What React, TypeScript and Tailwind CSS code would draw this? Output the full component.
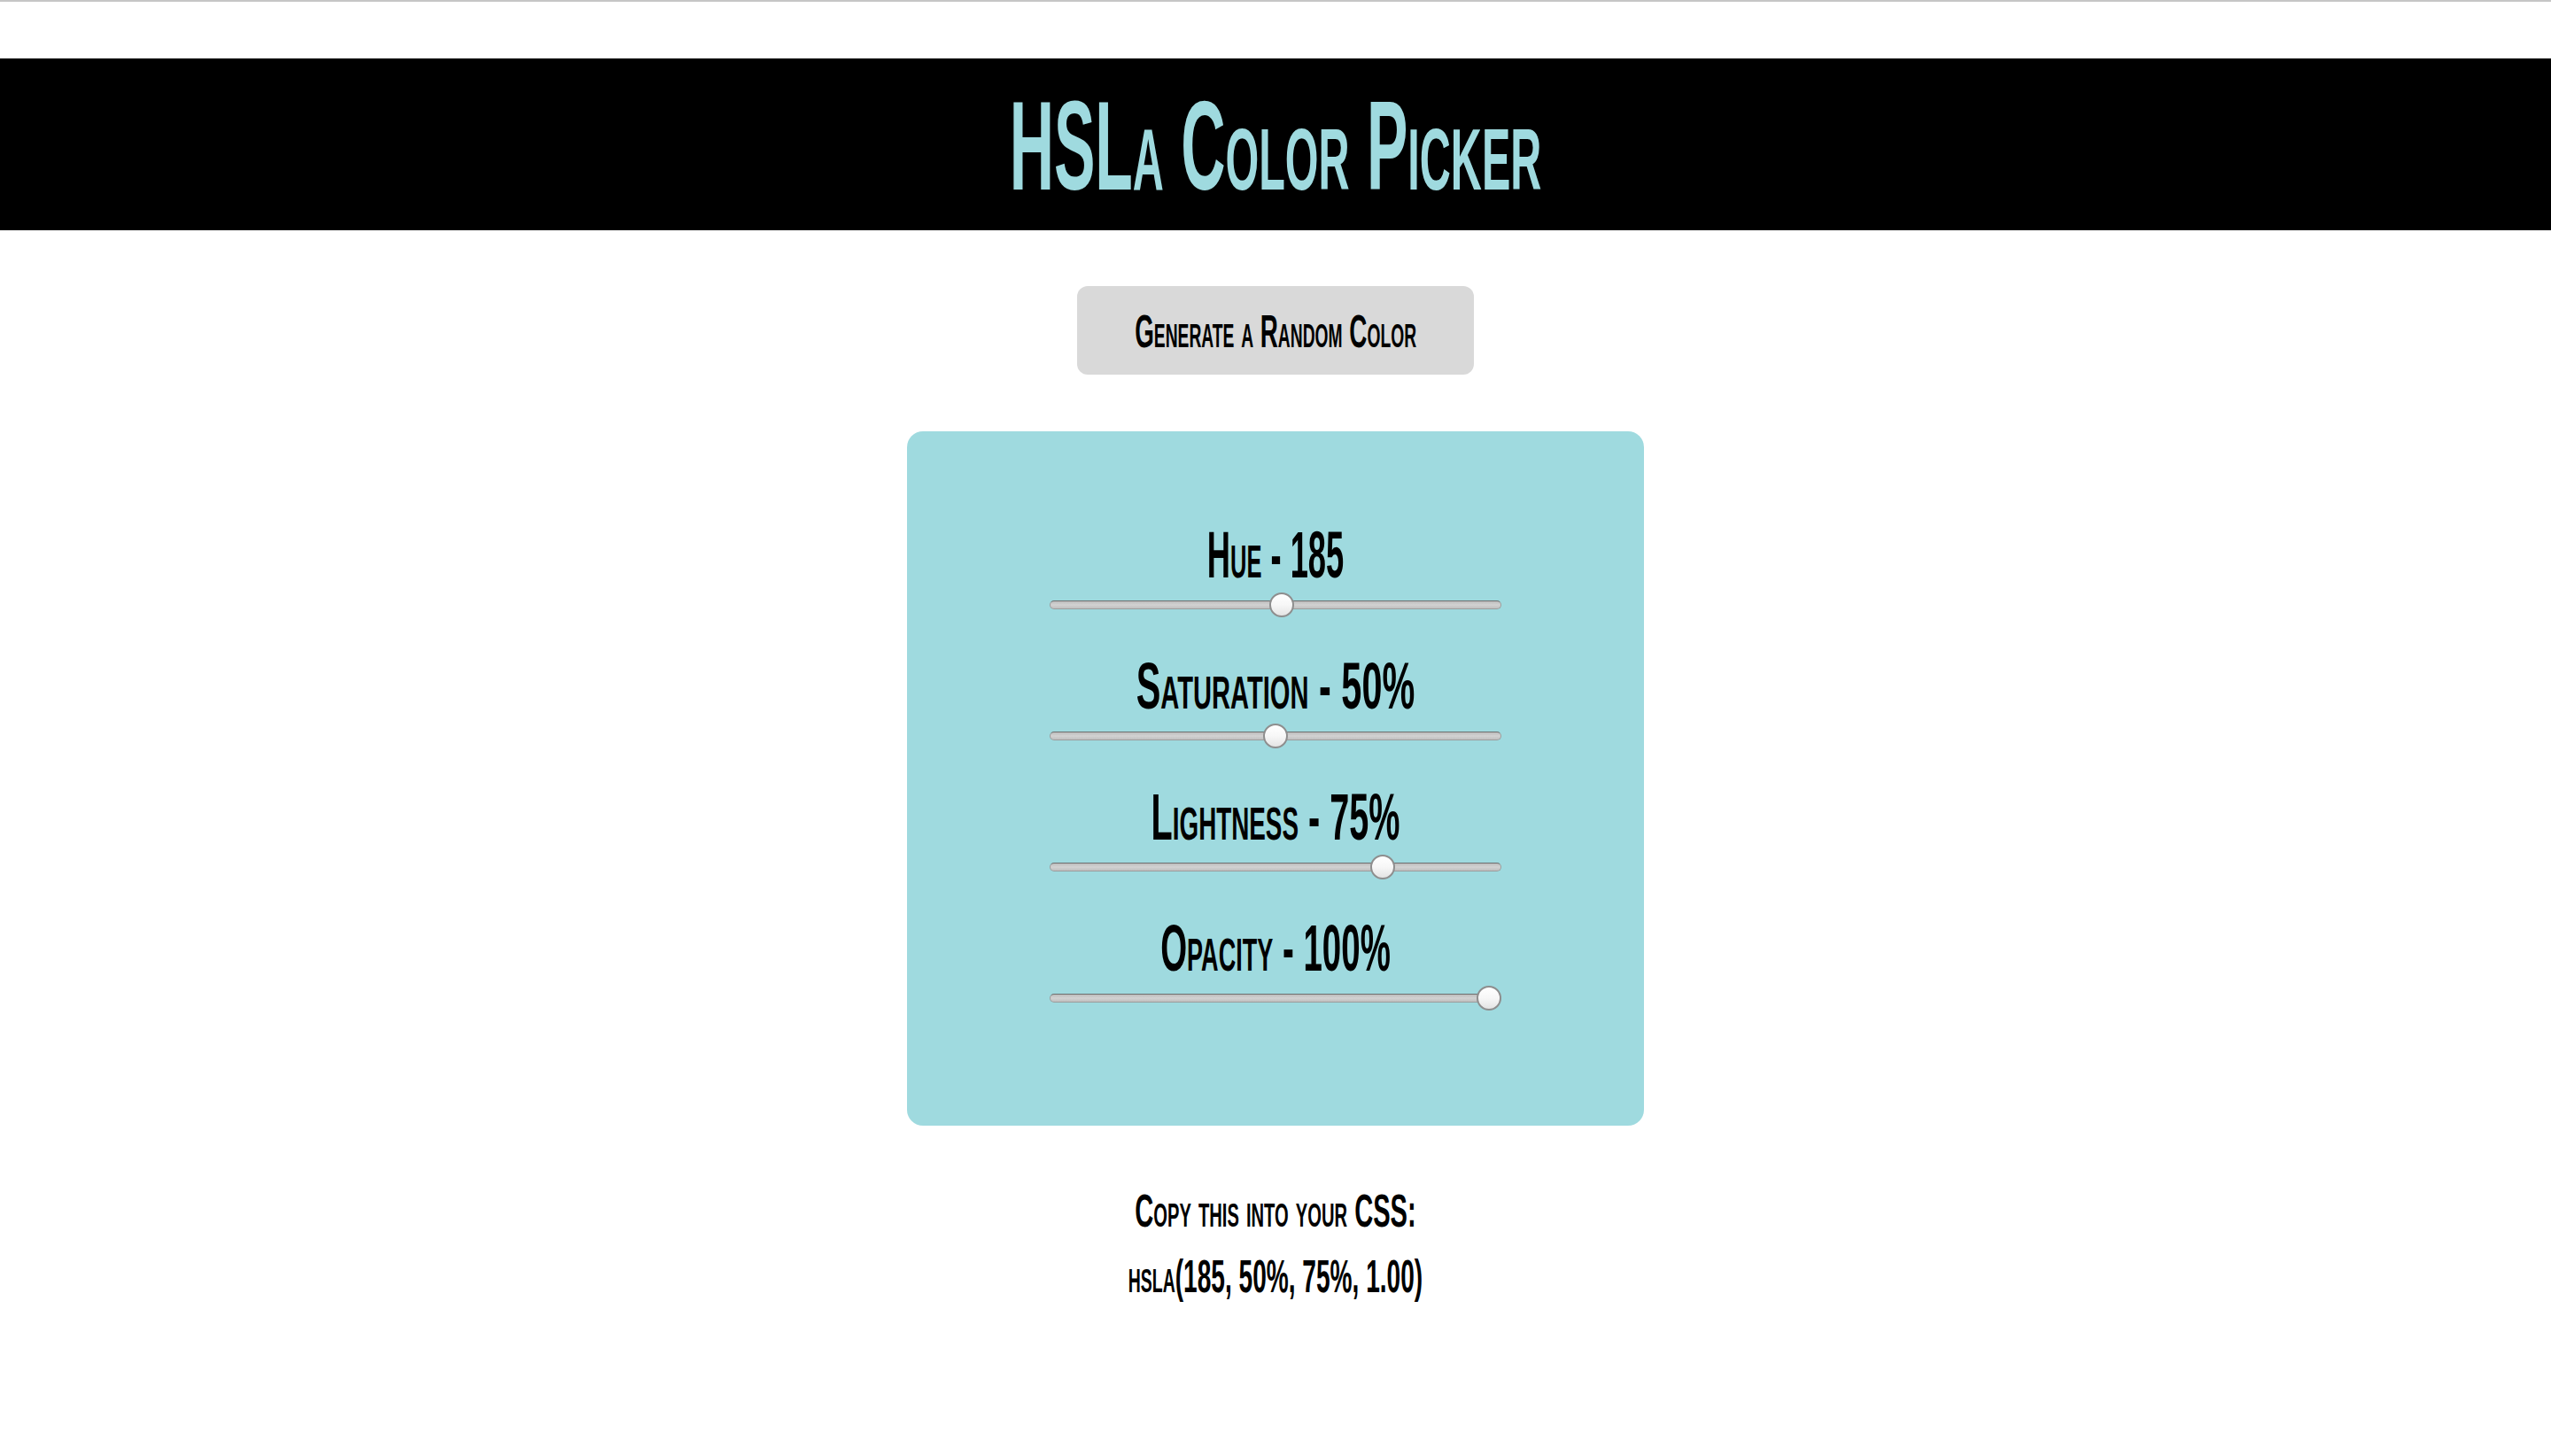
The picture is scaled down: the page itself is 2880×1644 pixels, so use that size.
import { useState } from "react";

interface Channel {
  key: "h" | "s" | "l" | "a";
  label: string;
  max: number;
  scale: string;
}

const channels: Channel[] = [
  { key: "h", label: "Hue", max: 360, scale: "scale-x-[0.49]" },
  { key: "s", label: "Saturation", max: 100, scale: "scale-x-[0.56]" },
  { key: "l", label: "Lightness", max: 100, scale: "scale-x-[0.535]" },
  { key: "a", label: "Opacity", max: 100, scale: "scale-x-[0.52]" },
];

const font = "font-['Liberation_Sans',Arial,sans-serif] font-bold [font-variant:small-caps]";

function Slider({ pct }: { pct: number }) {
  return (
    <div className="relative h-[30px] w-[510px]">
      <div className="absolute left-0 right-0 top-[10px] h-[10px] rounded-full border border-[#9c9c9c] border-t-[#6f6f6f] bg-linear-to-b from-[#bcbcbc] via-[#d2d2d2] to-[#bfbfbf]" />
      <div
        className="absolute top-px h-[28px] w-[28px] rounded-full border-2 border-[#8e8e8e] bg-linear-to-b from-white via-[#f7f7f7] to-[#e4e4e4]"
        style={{ left: pct * 482 }}
      />
    </div>
  );
}

export default function App() {
  const [color, setColor] = useState({ h: 185, s: 50, l: 75, a: 100 });

  const randomize = () => {
    setColor({
      h: Math.floor(Math.random() * 361),
      s: Math.floor(Math.random() * 101),
      l: Math.floor(Math.random() * 101),
      a: 100,
    });
  };

  const swatch = `hsla(${color.h}, ${color.s}%, ${color.l}%, ${(color.a / 100).toFixed(2)})`;

  return (
    <div className={`min-h-screen bg-white text-black ${font}`}>
      <div className="h-[2px] bg-[#c6c6c6]" />

      <header className="mt-[64px] h-[194px] bg-black pt-[28px]">
        <h1 className="scale-x-[0.49] text-center text-[142px] leading-none text-[#9fdadf]">
          HSLa Color Picker
        </h1>
      </header>

      <div className="flex flex-col items-center">
        <button
          onClick={randomize}
          className="mt-[63px] flex h-[100px] w-[448px] justify-center rounded-[12px] bg-[#d9d9d9] pt-[25px] text-[52px] leading-none text-black"
        >
          <span className="block shrink-0 scale-x-[0.535] whitespace-nowrap">Generate a Random Color</span>
        </button>

        <div
          className="mt-[64px] flex h-[784px] w-[832px] flex-col items-center gap-[40px] rounded-[18px] pt-[103px]"
          style={{ backgroundColor: swatch }}
        >
          {channels.map((c) => (
            <div key={c.key} className="flex flex-col items-center gap-[4px]">
              <div className={`w-[600px] text-center text-[74px] leading-none ${c.scale}`}>
                {c.label} - {color[c.key]}
                {c.key === "h" ? "" : "%"}
              </div>
              <Slider pct={color[c.key] / c.max} />
            </div>
          ))}
        </div>

        <div className="mt-[70px] w-[700px] scale-x-[0.56] text-center text-[52px] leading-none">
          Copy this into your CSS:
        </div>
        <div className="mt-[22px] w-[700px] scale-x-[0.54] text-center text-[52px] leading-none">
          {swatch}
        </div>
      </div>
    </div>
  );
}
